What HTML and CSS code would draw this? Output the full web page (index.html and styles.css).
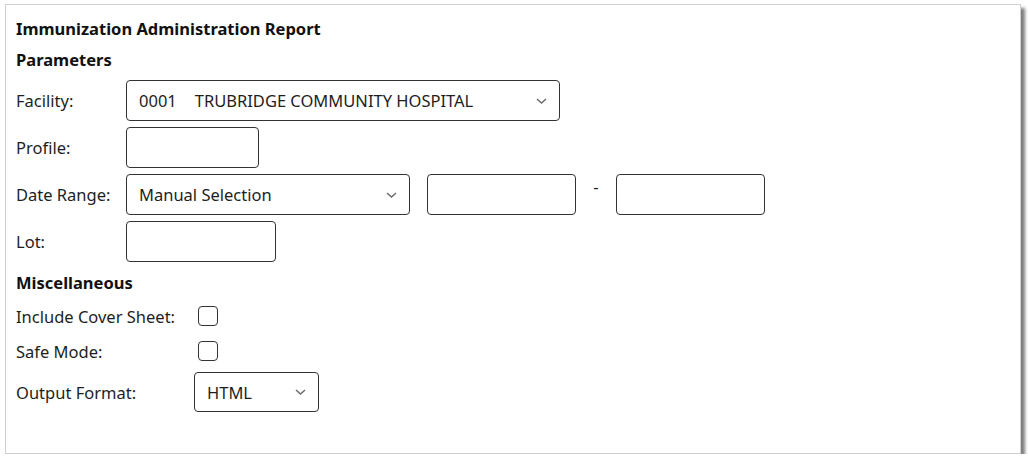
FILE: index.html
```html
<!DOCTYPE html>
<html lang="en">
<head>
<meta charset="utf-8">
<title>Immunization Administration Report</title>
<link rel="stylesheet" href="styles.css">
</head>
<body>
<div class="frame">
  <h1 class="title">Immunization Administration Report</h1>
  <h2 class="section">Parameters</h2>
  <div class="params">
    <div class="row">
      <span class="label">Facility:</span>
      <div class="select select-facility">
        <span class="value"><span class="code">0001</span>TRUBRIDGE COMMUNITY HOSPITAL</span>
        <svg class="chev" width="11" height="6" viewBox="0 0 11 6"><path d="M1 1 L5.5 5 L10 1" fill="none" stroke="#6b6b6b" stroke-width="1.5"/></svg>
      </div>
    </div>
    <div class="row">
      <span class="label">Profile:</span>
      <input class="input input-profile" type="text">
    </div>
    <div class="row">
      <span class="label">Date Range:</span>
      <div class="select select-range">
        <span class="value">Manual Selection</span>
        <svg class="chev" width="11" height="6" viewBox="0 0 11 6"><path d="M1 1 L5.5 5 L10 1" fill="none" stroke="#6b6b6b" stroke-width="1.5"/></svg>
      </div>
      <input class="input input-date first" type="text">
      <span class="dash">-</span>
      <input class="input input-date" type="text">
    </div>
    <div class="row">
      <span class="label">Lot:</span>
      <input class="input input-lot" type="text">
    </div>
  </div>
  <h2 class="section misc-head">Miscellaneous</h2>
  <div class="misc">
    <div class="mrow">
      <span class="mlabel">Include Cover Sheet:</span>
      <input class="check" type="checkbox">
    </div>
    <div class="mrow">
      <span class="mlabel">Safe Mode:</span>
      <input class="check" type="checkbox">
    </div>
    <div class="mrow output">
      <span class="mlabel">Output Format:</span>
      <div class="select select-format">
        <span class="value">HTML</span>
        <svg class="chev" width="11" height="6" viewBox="0 0 11 6"><path d="M1 1 L5.5 5 L10 1" fill="none" stroke="#6b6b6b" stroke-width="1.5"/></svg>
      </div>
    </div>
  </div>
</div>
</body>
</html>
```

FILE: styles.css
```css
html, body {
  margin: 0;
  padding: 0;
  background: #ffffff;
}
body {
  font-family: "Noto Sans", "Liberation Sans", sans-serif;
  font-size: 16.5px;
  color: #1e1e1e;
}
.frame {
  box-sizing: border-box;
  width: 1016px;
  height: 450px;
  margin: 4px 0 0 5px;
  border: 1px solid #cfcfcf;
  box-shadow: 4px 4px 3px rgba(0, 0, 0, 0.5);
  padding: 12px 10px 0 10px;
  background: #fff;
}
.title {
  margin: 0;
  font-size: 16.5px;
  font-weight: 700;
  line-height: 24px;
  color: #111;
}
.section {
  margin: 7px 0 0 0;
  font-size: 16.5px;
  font-weight: 700;
  line-height: 24px;
  color: #111;
}
.params {
  margin-top: 8px;
  display: flex;
  flex-direction: column;
  gap: 6px;
}
.row {
  display: flex;
  align-items: center;
  height: 41px;
}
.label {
  width: 110px;
  flex: none;
}
.select {
  box-sizing: border-box;
  height: 41px;
  border: 1px solid #333;
  border-radius: 4px;
  display: flex;
  align-items: center;
  justify-content: space-between;
  padding: 0 12px 0 12px;
  flex: none;
}
.select-facility { width: 434px; }
.select-range { width: 284px; }
.select-format { width: 125px; height: 40px; }
.code { margin-right: 18px; }
.chev { display: block; }
.input {
  box-sizing: border-box;
  height: 41px;
  border: 1px solid #333;
  border-radius: 4px;
  margin: 0;
  padding: 0 8px;
  font: inherit;
  background: #fff;
  flex: none;
}
.input-profile { width: 133px; }
.input-lot { width: 150px; }
.input-date { width: 149px; }
.input-date.first { margin-left: 17px; }
.dash {
  width: 40px;
  text-align: center;
  align-self: flex-start;
  line-height: 26px;
}
.misc-head { margin-top: 9px; }
.misc {
  margin-top: 4px;
  display: flex;
  flex-direction: column;
}
.mrow {
  display: flex;
  align-items: center;
  height: 34px;
}
.mrow + .mrow { margin-top: 1px; }
.mrow.output {
  height: 40px;
  margin-top: 4px;
}
.mlabel {
  width: 178px;
  flex: none;
}
.check {
  appearance: none;
  -webkit-appearance: none;
  box-sizing: border-box;
  width: 20px;
  height: 20px;
  margin: 0 0 0 4px;
  border: 1px solid #333;
  border-radius: 4px;
  background: #fff;
}
```
